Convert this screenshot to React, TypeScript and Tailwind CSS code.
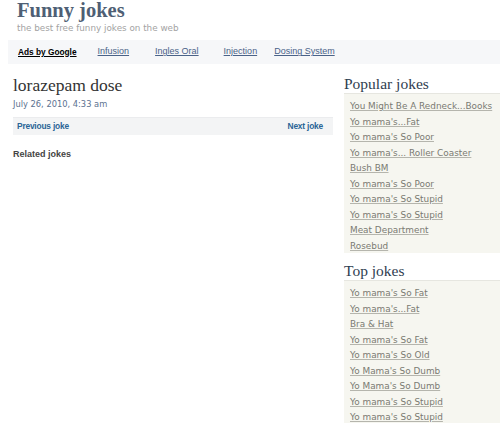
const sans = "font-['DejaVu_Sans',Verdana,sans-serif]";
const arial = "font-['Liberation_Sans',Arial,sans-serif]";
const serif = "font-['Liberation_Serif',Georgia,serif]";

const navLinks = [
  { label: "Infusion", gap: "mr-[26px]" },
  { label: "Ingles Oral", gap: "mr-[25px]" },
  { label: "Injection", gap: "mr-[17px]" },
  { label: "Dosing System", gap: "" },
];

const popular = [
  "You Might Be A Redneck...Books",
  "Yo mama's...Fat",
  "Yo mama's So Poor",
  "Yo mama's... Roller Coaster",
  "Bush BM",
  "Yo mama's So Poor",
  "Yo mama's So Stupid",
  "Yo mama's So Stupid",
  "Meat Department",
  "Rosebud",
];

const top = [
  "Yo mama's So Fat",
  "Yo mama's...Fat",
  "Bra & Hat",
  "Yo mama's So Fat",
  "Yo mama's So Old",
  "Yo Mama's So Dumb",
  "Yo Mama's So Dumb",
  "Yo mama's So Stupid",
  "Yo mama's So Stupid",
];

function JokeBox({ title, items }: { title: string; items: string[] }) {
  return (
    <div className="mb-[9px]">
      <h3 className={`${serif} text-[15.5px] leading-[18px] text-[#2f3d4f]`}>{title}</h3>
      <ul className="border-t border-[#e6e6e0] bg-[#f6f6f0] pt-[2px] pb-[2px] pl-[6px]">
        {items.map((item, i) => (
          <li key={i} className="h-[15.5px] leading-[15.5px] whitespace-nowrap">
            <a href="#" className={`${sans} text-[8.9px] text-[#7a7a72] underline decoration-[#b5b5ad]`}>
              {item}
            </a>
          </li>
        ))}
      </ul>
    </div>
  );
}

export default function App() {
  return (
    <div className="w-[500px] h-[423px] overflow-hidden bg-white">
      <header className="pl-[17px]">
        <h1 className={`${serif} font-bold text-[20.5px] leading-[24px] text-[#4f5f75] mt-[-2px]`}>Funny jokes</h1>
        <p className={`${sans} text-[8.8px] leading-[12px] text-[#a3a3a3]`}>
          the best free funny jokes on the web
        </p>
      </header>

      <nav className={`${arial} ml-[8px] mt-[6px] h-[24px] bg-[#f6f7f9] flex items-center pl-[10px] text-[9px]`}>
        <a href="#" className="font-bold text-[8.3px] text-black underline mr-[21px]">Ads by Google</a>
        {navLinks.map((l) => (
          <a key={l.label} href="#" className={`text-[#4a6288] underline ${l.gap}`}>
            {l.label}
          </a>
        ))}
      </nav>

      <div className="flex mt-[10px]">
        <main className="ml-[13px] w-[320px] shrink-0">
          <h2 className={`${serif} text-[17.5px] leading-[22px] text-[#333]`}>lorazepam dose</h2>
          <p className={`${sans} text-[8.3px] leading-[13px] text-[#5b7190] mt-[2px]`}>July 26, 2010, 4:33 am</p>
          <div className={`${arial} mt-[6px] h-[18px] bg-[#f3f4f5] border-t border-[#ebecee] flex items-center justify-between pl-[4px] pr-[10px] text-[8.4px] tracking-[-0.2px] font-bold text-[#2a6496]`}>
            <a href="#">Previous joke</a>
            <a href="#">Next joke</a>
          </div>
          <h4 className={`${arial} mt-[13px] text-[9px] leading-[12px] font-bold text-[#444]`}>Related jokes</h4>
        </main>

        <aside className="ml-[11px] flex-1 mt-[1px]">
          <JokeBox title="Popular jokes" items={popular} />
          <JokeBox title="Top jokes" items={top} />
        </aside>
      </div>
    </div>
  );
}
